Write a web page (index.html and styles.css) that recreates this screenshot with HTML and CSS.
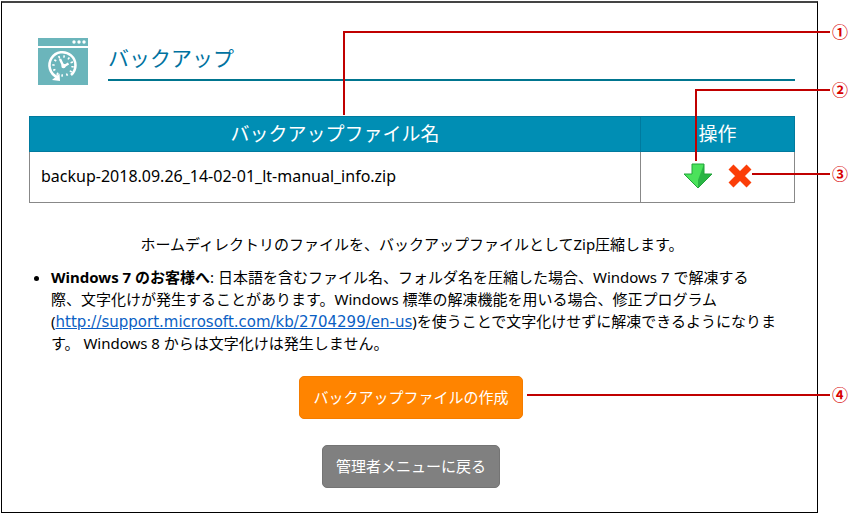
FILE: index.html
```
<!DOCTYPE html>
<html lang="ja">
<head>
  <meta charset="UTF-8">
  <meta name="viewport" content="width=device-width, initial-scale=1">
  <title>バックアップ</title>
  <link rel="stylesheet" href="styles.css">
</head>
<body>
  <main class="panel">
    <header class="page-head">
      <svg class="page-icon" viewBox="0 0 50 47" aria-hidden="true">
        <path fill="#6bb5bb" d="M0 0h50v8H0zM0 10h50v37H0z"/>
        <g fill="#fff">
          <circle cx="36" cy="4" r="1.7"/>
          <circle cx="41" cy="4" r="1.7"/>
          <circle cx="46" cy="4" r="1.7"/>
        </g>
        <path fill="none" stroke="#fff" stroke-width="2.6" d="M19 39A13 13 0 1 1 33 37"/>
        <circle cx="25" cy="28" r="9.5" fill="none" stroke="#fff" stroke-width="2.4" stroke-dasharray="1.6 3.374"/>
        <path fill="none" stroke="#fff" stroke-width="2.4" d="M22 21l3.500 7.500 5-3"/>
        <circle cx="25.500" cy="28" r="2.200" fill="#fff"/>
        <path fill="#fff" d="M14 42l7.500-6.500 .5 7.500z"/>
      </svg>
      <h1>バックアップ</h1>
    </header>

    <table class="files">
      <thead>
        <tr>
          <th>バックアップファイル名</th>
          <th class="col-action">操作</th>
        </tr>
      </thead>
      <tbody>
        <tr>
          <td>backup-2018.09.26_14-02-01_lt-manual_info.zip</td>
          <td class="actions">
            <button type="button" class="icon-btn" aria-label="ダウンロード">
              <svg width="30" height="26" viewBox="0 0 30 26">
                <path fill="#4be25b" d="M9 1h12v10h8L15 25 1 11h8z"/>
                <path fill="#2ab545" d="M21 1v10h8L15 25V17z"/>
                <path fill="none" stroke="#23a43b" d="M9 1h12v10h8L15 25 1 11h8z"/>
              </svg>
            </button>
            <button type="button" class="icon-btn" aria-label="削除">
              <svg width="24" height="26" viewBox="0 0 24 26">
                <path stroke="#fb3e08" stroke-width="7" d="M3 4l18 18M21 4L3 22"/>
              </svg>
            </button>
          </td>
        </tr>
      </tbody>
    </table>

    <p class="intro">ホームディレクトリのファイルを、バックアップファイルとしてZip圧縮します。</p>

    <ul class="notes">
      <li><strong>Windows 7 のお客様へ</strong>: 日本語を含むファイル名、フォルダ名を圧縮した場合、Windows 7 で解凍する<br>際、文字化けが発生することがあります。Windows 標準の解凍機能を用いる場合、修正プログラム (<a href="http://support.microsoft.com/kb/2704299/en-us">http://support.microsoft.com/kb/2704299/en-us</a>)を使うことで文字化けせずに解凍できるようになります。 Windows 8 からは文字化けは発生しません。</li>
    </ul>

    <div class="buttons">
      <button type="button" class="btn btn-create">バックアップファイルの作成</button>
      <button type="button" class="btn btn-back">管理者メニューに戻る</button>
    </div>
  </main>

  <!-- 説明用の引き出し線 -->
  <div class="callout callout-name"><span>①</span></div>
  <div class="callout callout-download"><span>②</span></div>
  <div class="callout callout-delete"><span>③</span></div>
  <div class="callout callout-create"><span>④</span></div>
</body>
</html>
```

FILE: styles.css
```
* {
  box-sizing: border-box;
}

body {
  margin: 0;
  padding: 1px 33px 2px 1px;
  position: relative;
  background: #fff;
  color: #000;
  font-family: "Noto Sans", "Noto Sans CJK JP", sans-serif;
  font-size: 15px;
  line-height: 22px;
}

.panel {
  border: 1px solid #000;
  border-top: 2px solid #444;
  padding: 35px 22px 24px 27px;
}

.page-head {
  display: flex;
  gap: 20px;
  padding-left: 9px;
}

.page-icon {
  width: 50px;
  height: 47px;
  flex: none;
}

.page-head h1 {
  flex: 1;
  margin: 0;
  height: 43px;
  border-bottom: 2px solid #00758f;
  color: #0072a0;
  font-family: "Noto Sans CJK JP", sans-serif;
  font-size: 21px;
  font-weight: 400;
  line-height: 38px;
}

.files {
  width: 100%;
  margin-top: 31px;
  border-collapse: collapse;
}

.files th {
  height: 35px;
  padding: 0;
  border: 1px solid #007a9e;
  background: #008eb4;
  color: #fff;
  font-size: 19px;
  font-weight: 400;
}

.files td {
  height: 51px;
  padding: 0 11px 2px;
  border: 1px solid #888;
  font-size: 16px;
}

.files .col-action {
  width: 154px;
}

.files .actions {
  text-align: center;
}

.icon-btn {
  margin: 0 5px;
  padding: 0;
  border: 0;
  background: none;
  vertical-align: middle;
  cursor: pointer;
}

.icon-btn svg {
  display: block;
}

.intro {
  margin: 30px 0 11px;
  text-align: center;
}

.notes {
  margin: 0;
  padding: 0 15px 0 22px;
}

.notes a {
  color: #0b5fc4;
  font-family: "DejaVu Sans", sans-serif;
  line-height: 20px;
  white-space: nowrap;
}

.buttons {
  display: flex;
  flex-direction: column;
  align-items: center;
  gap: 26px;
  margin-top: 22px;
  padding-right: 2px;
}

.btn {
  height: 43px;
  padding: 0 13px 2px;
  border: 1px solid;
  border-radius: 5px;
  color: #fff;
  font: inherit;
  line-height: 20px;
  cursor: pointer;
}

.btn-create {
  background: #ff8400;
  border-color: #f47c00;
}

.btn-back {
  background: #808080;
  border-color: #747474;
}

.callout {
  position: absolute;
  right: 21px;
  border-top: 2px solid #c00000;
  pointer-events: none;
}

.callout span {
  position: absolute;
  top: -13px;
  left: 100%;
  margin-left: 2px;
  color: #d80000;
  font-family: "Noto Sans CJK JP", sans-serif;
  font-size: 16px;
  font-weight: 700;
}

.callout-name {
  top: 31px;
  left: 343px;
  height: 84px;
  border-left: 2px solid #c00000;
}

.callout-download {
  top: 89px;
  left: 695px;
  height: 72px;
  border-left: 2px solid #c00000;
}

.callout-delete {
  top: 173px;
  left: 752px;
}

.callout-create {
  top: 394px;
  left: 527px;
}
```
